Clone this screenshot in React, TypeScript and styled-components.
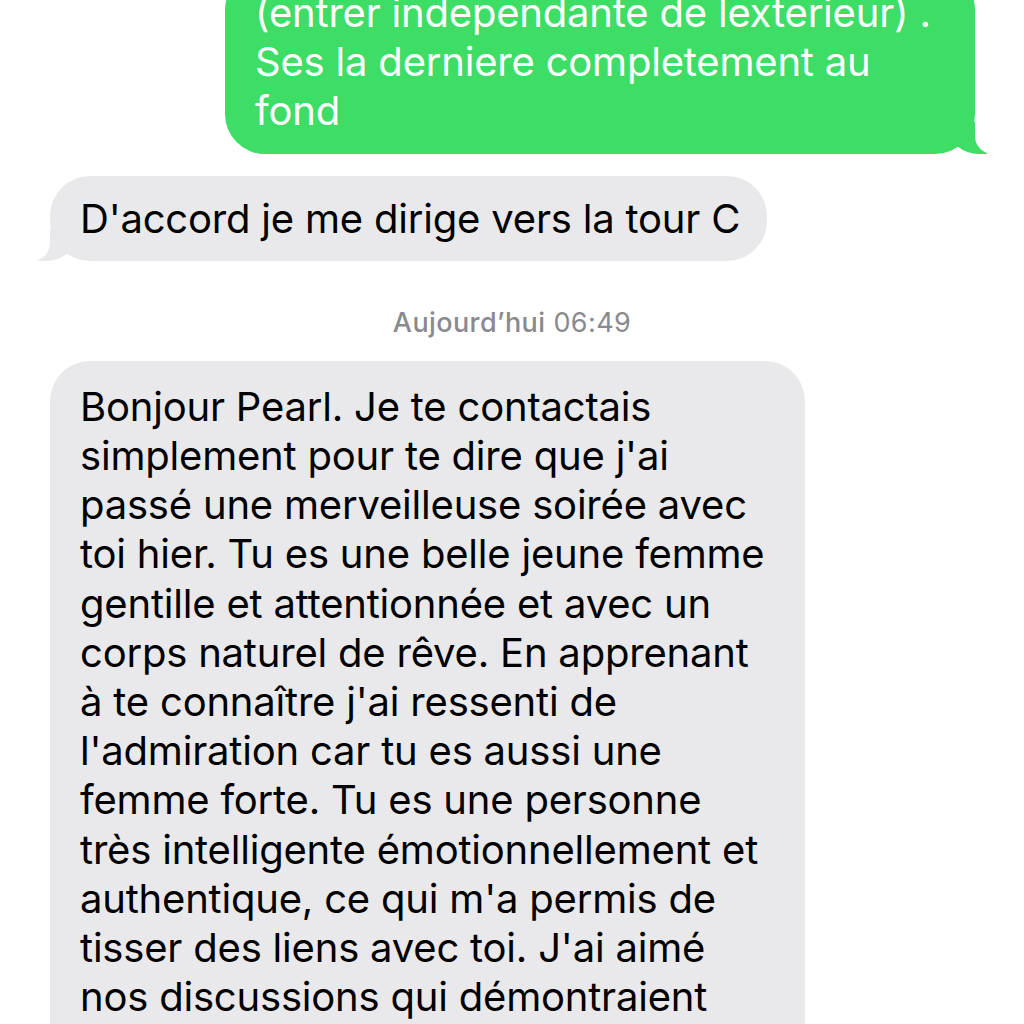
import styled, { createGlobalStyle } from "styled-components";

const GlobalStyle = createGlobalStyle`
  html, body {
    margin: 0;
    padding: 0;
    background: #ffffff;
    overflow: hidden;
  }
  body {
    font-family: Inter, "Liberation Sans", Arial, sans-serif;
    -webkit-font-smoothing: antialiased;
  }
`;

const Thread = styled.div`
  width: 1024px;
  height: 1024px;
  overflow: hidden;
  display: flex;
  flex-direction: column;
`;

const Scroll = styled.div`
  display: flex;
  flex-direction: column;
  margin-top: -30px;
`;

const Row = styled.div<{ $mine?: boolean; $gap?: number }>`
  display: flex;
  justify-content: ${(p) => (p.$mine ? "flex-end" : "flex-start")};
  padding: ${(p) => (p.$mine ? "0 49px 0 0" : "0 0 0 50px")};
  margin-top: ${(p) => p.$gap ?? 0}px;
`;

const Bubble = styled.div<{
  $mine?: boolean;
  $width: number;
  $tail?: boolean;
  $pt?: number;
  $pb?: number;
}>`
  position: relative;
  box-sizing: border-box;
  width: ${(p) => p.$width}px;
  padding: ${(p) => p.$pt ?? 18}px 20px ${(p) => p.$pb ?? 18}px 30px;
  border-radius: 40px;
  background: ${(p) => (p.$mine ? "#3ddd66" : "#e9e9eb")};
  color: ${(p) => (p.$mine ? "#ffffff" : "#000000")};
  font-size: 40px;
  line-height: 49.2px;
  letter-spacing: -0.2px;

  ${(p) =>
    p.$tail &&
    (p.$mine
      ? `
    &::before {
      content: "";
      position: absolute;
      bottom: 0;
      right: -12px;
      width: 38px;
      height: 32px;
      background: #3ddd66;
      border-bottom-left-radius: 30px 26px;
    }
    &::after {
      content: "";
      position: absolute;
      bottom: 0;
      right: -46px;
      width: 46px;
      height: 32px;
      background: #ffffff;
      border-bottom-left-radius: 18px;
    }
  `
      : `
    &::before {
      content: "";
      position: absolute;
      bottom: 0;
      left: -12px;
      width: 38px;
      height: 32px;
      background: #e9e9eb;
      border-bottom-right-radius: 30px 26px;
    }
    &::after {
      content: "";
      position: absolute;
      bottom: 0;
      left: -46px;
      width: 46px;
      height: 32px;
      background: #ffffff;
      border-bottom-right-radius: 18px;
    }
  `)}
`;

const Line = styled.span`
  display: block;
  white-space: nowrap;
  position: relative;
  z-index: 1;
`;

const Stamp = styled.div`
  margin-top: 47px;
  text-align: center;
  font-size: 27px;
  line-height: 30px;
  letter-spacing: 0.4px;
  color: #8a8a8e;
`;

const StampDay = styled.span`
  font-weight: 500;
`;

const outgoing = [
  "(entrer independante de lexterieur) .",
  "Ses la derniere completement au",
  "fond",
];

const reply = ["D'accord je me dirige vers la tour C"];

const letter = [
  "Bonjour Pearl. Je te contactais",
  "simplement pour te dire que j'ai",
  "passé une merveilleuse soirée avec",
  "toi hier. Tu es une belle jeune femme",
  "gentille et attentionnée et avec un",
  "corps naturel de rêve. En apprenant",
  "à te connaître j'ai ressenti de",
  "l'admiration car tu es aussi une",
  "femme forte. Tu es une personne",
  "très intelligente émotionnellement et",
  "authentique, ce qui m'a permis de",
  "tisser des liens avec toi. J'ai aimé",
  "nos discussions qui démontraient",
];

export default function App() {
  return (
    <>
      <GlobalStyle />
      <Thread>
        <Scroll>
          <Row $mine>
            <Bubble $mine $tail $width={750}>
              {outgoing.map((l) => (
                <Line key={l}>{l}</Line>
              ))}
            </Bubble>
          </Row>
          <Row $gap={22}>
            <Bubble $tail $width={717}>
              {reply.map((l) => (
                <Line key={l}>{l}</Line>
              ))}
            </Bubble>
          </Row>
          <Stamp>
            <StampDay>Aujourd’hui</StampDay> 06:49
          </Stamp>
          <Row $gap={23}>
            <Bubble $width={755} $pt={21} $pb={80}>
              {letter.map((l) => (
                <Line key={l}>{l}</Line>
              ))}
            </Bubble>
          </Row>
        </Scroll>
      </Thread>
    </>
  );
}
